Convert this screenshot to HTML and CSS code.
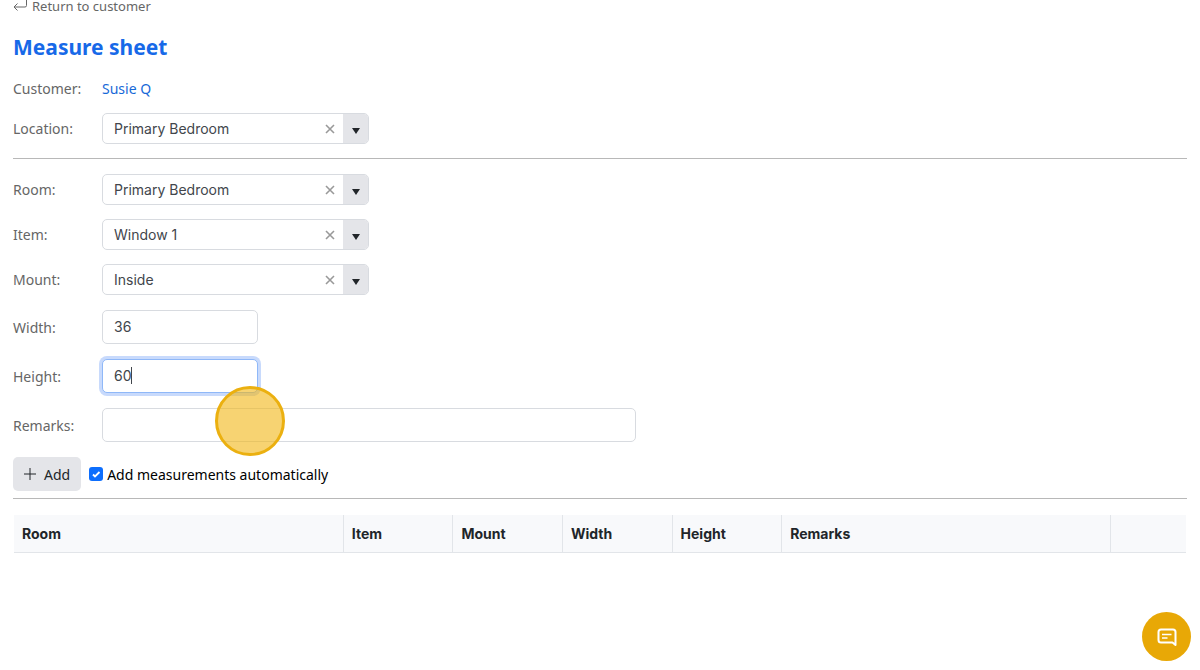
FILE: index.html
```html
<!DOCTYPE html>
<html lang="en">
<head>
    <meta charset="UTF-8">
    <meta name="viewport" content="width=device-width, initial-scale=1">
    <title>Measure sheet</title>
    <link rel="stylesheet" href="styles.css">
</head>
<body>
<main class="page">
    <a class="back-link" href="#">
        <svg width="14" height="12" viewBox="0 0 14 12" fill="none" stroke="currentColor"><path d="M13.500 0V5.500Q13.500 7 12 7H1M4.500 3.500L1 7L4.500 10.500"/></svg>
        Return to customer
    </a>
    <h1 class="title">Measure sheet</h1>

    <form>
        <div class="row row-customer">
            <span class="label">Customer:</span>
            <a class="customer" href="#">Susie Q</a>
        </div>
        <div class="row">
            <label class="label" for="location">Location:</label>
            <div class="combo">
                <select id="location"><option>Primary Bedroom</option></select>
                <button type="button" class="clear" aria-label="Clear location"><svg width="10" height="10" viewBox="0 0 10 10"><path d="M1 1L9 9M9 1L1 9"/></svg></button>
                <span class="arrow"></span>
            </div>
        </div>

        <hr>

        <!-- measurement entry -->
        <div class="row">
            <label class="label" for="room">Room:</label>
            <div class="combo">
                <select id="room"><option>Primary Bedroom</option></select>
                <button type="button" class="clear" aria-label="Clear room"><svg width="10" height="10" viewBox="0 0 10 10"><path d="M1 1L9 9M9 1L1 9"/></svg></button>
                <span class="arrow"></span>
            </div>
        </div>
        <div class="row">
            <label class="label" for="item">Item:</label>
            <div class="combo">
                <select id="item"><option>Window 1</option></select>
                <button type="button" class="clear" aria-label="Clear item"><svg width="10" height="10" viewBox="0 0 10 10"><path d="M1 1L9 9M9 1L1 9"/></svg></button>
                <span class="arrow"></span>
            </div>
        </div>
        <div class="row">
            <label class="label" for="mount">Mount:</label>
            <div class="combo">
                <select id="mount"><option>Inside</option></select>
                <button type="button" class="clear" aria-label="Clear mount"><svg width="10" height="10" viewBox="0 0 10 10"><path d="M1 1L9 9M9 1L1 9"/></svg></button>
                <span class="arrow"></span>
            </div>
        </div>
        <div class="sizes">
            <div class="row">
                <label class="label" for="width">Width:</label>
                <input class="text" type="text" id="width" value="36">
            </div>
            <div class="row">
                <label class="label" for="height">Height:</label>
                <div class="field">
                    <input class="text" type="text" id="height" value="60" autofocus>
                    <span class="caret"></span>
                </div>
            </div>
            <div class="row">
                <label class="label" for="remarks">Remarks:</label>
                <div class="field remarks">
                    <input class="text" type="text" id="remarks">
                    <span class="click-mark"></span>
                </div>
            </div>
        </div>
        <div class="actions">
            <button type="button" class="add">
                <svg width="12" height="12" viewBox="0 0 12 12" stroke="currentColor"><path d="M6 0V12M0 6H12"/></svg>
                Add
            </button>
            <input type="checkbox" id="auto" checked>
            <label for="auto">Add measurements automatically</label>
        </div>
    </form>

    <hr class="end">

    <div class="grid-wrap">
        <table class="grid">
            <colgroup>
                <col class="wide"><col class="narrow"><col class="narrow"><col class="narrow"><col class="narrow"><col class="wide"><col>
            </colgroup>
            <thead>
                <tr><th>Room</th><th>Item</th><th>Mount</th><th>Width</th><th>Height</th><th>Remarks</th><th></th></tr>
            </thead>
        </table>
    </div>
</main>

<button type="button" class="chat" aria-label="Open chat">
    <svg width="20" height="20" viewBox="0 0 20 20" fill="none" stroke="#fff" stroke-width="2" stroke-linejoin="round"><path d="M4 2.500H16Q18.500 2.500 18.500 5V18L15.500 15.500H4Q1.500 15.500 1.500 13V5Q1.500 2.500 4 2.500Z"/><path d="M5 7.500H14.500M5 11H10.500" stroke-width="1.700"/></svg>
</button>

<script>
    document.getElementById("height").focus();
</script>
</body>
</html>
```
FILE: styles.css
```css
* {
    box-sizing: border-box;
}
body {
    margin: 0;
    background-color: #fff;
    color: #666;
    font-family: "Noto Sans", sans-serif;
    font-size: 14px;
}
.page {
    padding: 0 13px;
}
.back-link {
    display: flex;
    align-items: center;
    gap: 5px;
    height: 12px;
    line-height: 12px;
    font-size: 13px;
    color: #666;
    text-decoration: none;
}
.title {
    margin: 20px 0 16px;
    color: #1769e8;
    font-size: 21px;
    line-height: 30px;
}
.row {
    display: flex;
    align-items: center;
    margin-bottom: 14px;
}
.row-customer {
    height: 21px;
}
.label {
    width: 89px;
}
.customer {
    color: #1769d8;
    text-decoration: none;
}

/* drop-down with clear button and arrow */
.combo {
    display: grid;
    grid-template-columns: 1fr 26px 25px;
    width: 267px;
    height: 31px;
    border: 1px solid #d8dbe0;
    border-radius: 5px;
    overflow: hidden;
}
.combo select {
    grid-area: 1 / 1 / 2 / 4;
    appearance: none;
    border: 0;
    padding: 0 11px;
    background: none;
    color: #42464c;
    font-family: Inter, sans-serif;
    font-size: 14px;
}
.clear {
    grid-area: 1 / 2;
    display: grid;
    place-items: center;
    padding: 0;
    border: 0;
    background: none;
    z-index: 1;
}
.clear path {
    stroke: #999;
    stroke-width: 1.6;
}
.arrow {
    grid-area: 1 / 3;
    display: grid;
    place-items: center;
    padding-top: 4px;
    background-color: #e4e5e9;
    pointer-events: none;
}
.arrow::before {
    content: "";
    border: 4px solid transparent;
    border-top: 6px solid #212529;
    border-bottom: 0;
}

hr {
    height: 1px;
    margin: 14px 0 15px;
    border: 0;
    background-color: #b8b8b8;
}
.end {
    margin: 7px 0 16px;
}
.sizes {
    padding-top: 1px;
}
.sizes .row {
    margin-bottom: 15px;
}
.text {
    display: block;
    width: 156px;
    height: 34px;
    padding: 0 11px 2px;
    border: 1px solid #d8dbe0;
    border-radius: 5px;
    color: #42464c;
    font-family: Inter, sans-serif;
    font-size: 14px;
}
.text:focus {
    outline: 0;
    border-color: #8fb8f8;
    box-shadow: 0 0 0 3px #c8dafc;
    caret-color: transparent;
}
.field {
    position: relative;
}
.caret {
    position: absolute;
    left: 29px;
    top: 8px;
    width: 1px;
    height: 17px;
    background-color: #42464c;
}
.remarks {
    width: 534px;
}
.remarks .text {
    width: 100%;
}
/* click highlight lies over the form */
.click-mark {
    position: absolute;
    left: 113px;
    top: -22px;
    width: 70px;
    height: 70px;
    border: 3px solid #ebb010;
    border-radius: 50%;
    background-color: rgba(242, 182, 20, 0.6);
    pointer-events: none;
}
.actions {
    display: flex;
    align-items: center;
    color: #000;
}
.add {
    display: flex;
    align-items: center;
    gap: 8px;
    height: 34px;
    padding: 0 11px;
    border: 0;
    border-radius: 5px;
    background-color: #e4e5e9;
    color: #212529;
    font-family: "Noto Sans", sans-serif;
    font-size: 14px;
}
.actions input {
    appearance: none;
    width: 14px;
    height: 14px;
    margin: 0 4px 0 8px;
    border-radius: 3px;
    background: #0d6efd url("data:image/svg+xml,%3Csvg xmlns='http://www.w3.org/2000/svg' viewBox='0 0 14 14'%3E%3Cpath d='M4 7.500l2 2 4.500-4.500' fill='none' stroke='white' stroke-width='1.800'/%3E%3C/svg%3E");
}

.grid-wrap {
    padding: 0 1px;
}
.grid {
    width: 100%;
    border-collapse: collapse;
    table-layout: fixed;
}
.wide {
    width: 28.1%;
}
.narrow {
    width: 9.35%;
}
.grid th {
    height: 37px;
    padding: 0 8px;
    border-right: 1px solid #e2e5e9;
    border-bottom: 1px solid #e2e5e9;
    background-color: #f8f9fb;
    color: #212529;
    font-family: Inter, sans-serif;
    font-weight: 700;
    text-align: left;
}
.grid th:last-child {
    border-right: 0;
}

.chat {
    position: fixed;
    right: 9px;
    bottom: 9px;
    display: grid;
    place-items: center;
    width: 49px;
    height: 49px;
    padding: 0;
    border: 0;
    border-radius: 50%;
    background-color: #e8a806;
}
```
